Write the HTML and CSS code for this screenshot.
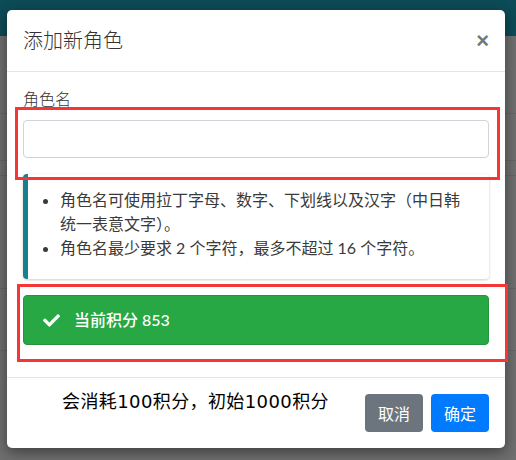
FILE: index.html
```html
<!DOCTYPE html>
<html lang="zh">
<head>
<meta charset="utf-8">
<title>添加新角色</title>
<link rel="stylesheet" href="styles.css">
</head>
<body>
<div class="page">
  <div class="topbar"></div>
  <div class="backdrop">
    <div class="rule r1"></div>
    <div class="rule r2"></div>
    <div class="rule r3"></div>
    <div class="rule r4"></div>
    <div class="rule r5"></div>
  </div>
</div>

<div class="modal">
  <div class="modal-header">
    <h5 class="modal-title">添加新角色</h5>
    <span class="close">×</span>
  </div>
  <div class="modal-body">
    <label class="label">角色名</label>
    <input class="input" type="text">
    <div class="callout">
      <ul class="rules">
        <li>角色名可使用拉丁字母、数字、下划线以及汉字（中日韩统一表意文字）。</li>
        <li>角色名最少要求 2 个字符，最多不超过 16 个字符。</li>
      </ul>
    </div>
    <div class="alert">
      <svg class="check" viewBox="0 0 512 512" width="17" height="17"><path fill="#fff" d="M173.898 439.404l-166.4-166.4c-9.997-9.997-9.997-26.206 0-36.204l36.203-36.204c9.997-9.998 26.207-9.998 36.204 0L192 312.69 432.095 72.596c9.997-9.997 26.207-9.997 36.204 0l36.203 36.204c9.997 9.997 9.997 26.206 0 36.204l-294.4 294.401c-9.998 9.997-26.207 9.997-36.204-.001z"/></svg>
      <span class="alert-text">当前积分 853</span>
    </div>
  </div>
  <div class="modal-footer">
    <div class="cost">会消耗100积分，初始1000积分</div>
    <button class="btn btn-gray">取消</button>
    <button class="btn btn-blue">确定</button>
  </div>
</div>

<div class="mark mark1"></div>
<div class="mark mark2"></div>
</body>
</html>
```
FILE: styles.css
```css
html, body {
  margin: 0;
  padding: 0;
}
body {
  width: 516px;
  height: 460px;
  overflow: hidden;
  position: relative;
  font-family: "Lato", "Noto Sans CJK SC", sans-serif;
  background: #6f6f6f;
}
.page {
  display: flex;
  flex-direction: column;
  height: 460px;
}
.topbar {
  height: 36px;
  background: #0d4b57;
}
.backdrop {
  flex: 1;
  background: #6f6f6f;
  position: relative;
}
.rule {
  position: absolute;
  left: 0;
  right: 0;
  height: 1px;
  background: #656565;
}
.r1 { top: 77px; }
.r2 { top: 124px; }
.r3 { top: 139px; }
.r4 { top: 252px; }
.r5 { top: 314px; }

.modal {
  position: absolute;
  left: 7px;
  top: 10px;
  width: 498px;
  height: 438px;
  background: #fff;
  border-radius: 5px;
  box-shadow: 0 4px 14px rgba(0, 0, 0, 0.45);
  display: flex;
  flex-direction: column;
  color: #333;
}
.modal-header {
  display: flex;
  align-items: center;
  justify-content: space-between;
  padding: 14px 16px 16px 16px;
  height: 31px;
  border-bottom: 1px solid #e5e5e5;
}
.modal-title {
  margin: 0;
  font-family: "Noto Sans CJK SC", sans-serif;
  font-weight: 300;
  font-size: 20px;
  line-height: 30px;
  color: #333;
}
.close {
  font-family: "Liberation Sans", sans-serif;
  font-size: 22px;
  font-weight: bold;
  color: #777;
  line-height: 20px;
  margin-top: 2px;
}
.modal-body {
  padding: 16px 16px 16px 16px;
  display: flex;
  flex-direction: column;
}
.label {
  font-family: "Noto Sans CJK SC", sans-serif;
  font-weight: 300;
  font-size: 16px;
  line-height: 24px;
  color: #333;
  margin-top: -2px;
  margin-bottom: 10px;
}
.input {
  box-sizing: border-box;
  height: 38px;
  width: 100%;
  margin: 0 0 16px 0;
  border: 1px solid #ced4da;
  border-radius: 4px;
  background: #fff;
  padding: 6px 12px;
  font-size: 16px;
}
.callout {
  box-sizing: border-box;
  height: 105px;
  border-left: 5px solid #17808e;
  border-radius: 4px;
  box-shadow: 0 1px 3px rgba(0, 0, 0, 0.2);
  padding: 14px 14px 10px 0;
  margin-bottom: 16px;
}
.rules {
  margin: 0;
  padding-left: 32px;
  font-family: "Lato", "Noto Sans CJK SC", sans-serif;
  font-size: 16px;
  line-height: 24px;
  color: #3a3a3a;
}
.alert {
  box-sizing: border-box;
  height: 50px;
  background: #28a745;
  border: 1px solid #23963d;
  border-radius: 4px;
  display: flex;
  align-items: center;
  padding-left: 19px;
  gap: 14px;
  color: #fff;
  margin-bottom: 16px;
}
.check {
  display: block;
}
.alert-text {
  font-family: "Lato", "Noto Sans CJK SC", sans-serif;
  font-weight: 500;
  font-size: 16px;
  line-height: 24px;
}
.modal-footer {
  border-top: 1px solid #e5e5e5;
  padding: 16px 16px 16px 16px;
  display: flex;
  align-items: flex-start;
  gap: 8px;
}
.cost {
  flex: 1;
  padding-left: 39px;
  font-family: "DejaVu Sans", "Noto Sans CJK SC", sans-serif;
  font-size: 18px;
  line-height: 22px;
  letter-spacing: 0.4px;
  margin-top: -3px;
  color: #000;
}
.btn {
  width: 58px;
  height: 38px;
  border: none;
  border-radius: 4px;
  color: #fff;
  font-family: "Noto Sans CJK SC", sans-serif;
  font-size: 16px;
  padding: 0;
}
.btn-gray { background: #6c757d; }
.btn-blue { background: #007bff; }

.mark {
  position: absolute;
  border: 3px solid #f53636;
  box-sizing: border-box;
}
.mark1 {
  left: 15px;
  top: 107px;
  width: 485px;
  height: 73px;
}
.mark2 {
  left: 17px;
  top: 284px;
  width: 491px;
  height: 78px;
}
```
